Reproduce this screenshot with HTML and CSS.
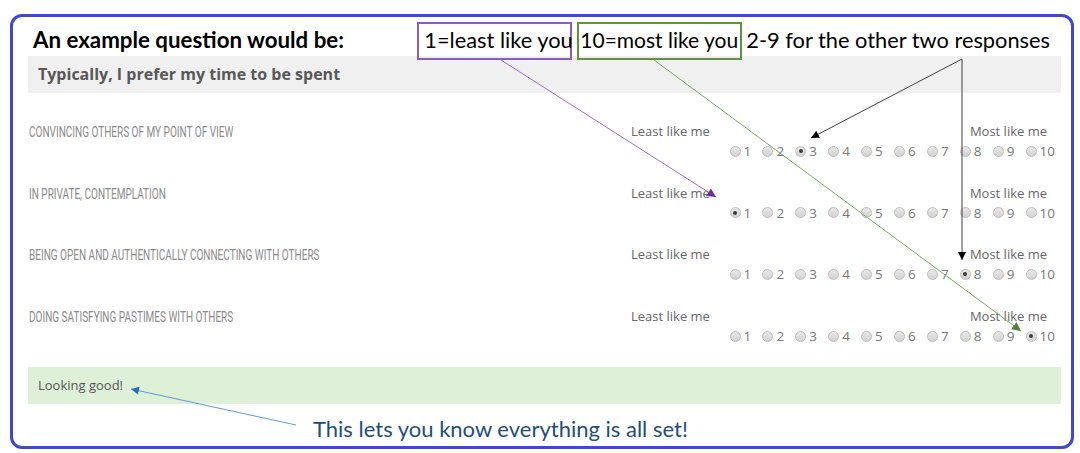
FILE: index.html
```html
<!DOCTYPE html>
<html lang="en">
<head>
<meta charset="utf-8">
<title>Example question</title>
<link rel="stylesheet" href="styles.css">
</head>
<body>
<div class="frame">
  <div class="intro">
    <h1 class="intro-title">An example question would be:</h1>
    <div class="notes">
      <span class="note note-least">1=least like you</span>
      <span class="note note-most">10=most like you</span>
      <span class="note-rest">2-9 for the other two responses</span>
    </div>
  </div>
  <div class="question">Typically, I prefer my time to be spent</div>
  <div class="rows">
    <div class="row">
      <div class="label"><span class="label-text">CONVINCING OTHERS OF MY POINT OF VIEW</span></div>
      <div class="scale">
        <div class="ends"><span>Least like me</span><span>Most like me</span></div>
        <div class="choices">
          <span class="choice"><span class="radio"></span>1</span>
          <span class="choice"><span class="radio"></span>2</span>
          <span class="choice"><span class="radio checked"></span>3</span>
          <span class="choice"><span class="radio"></span>4</span>
          <span class="choice"><span class="radio"></span>5</span>
          <span class="choice"><span class="radio"></span>6</span>
          <span class="choice"><span class="radio"></span>7</span>
          <span class="choice"><span class="radio"></span>8</span>
          <span class="choice"><span class="radio"></span>9</span>
          <span class="choice last"><span class="radio"></span>10</span>
        </div>
      </div>
    </div>
    <div class="row">
      <div class="label"><span class="label-text">IN PRIVATE, CONTEMPLATION</span></div>
      <div class="scale">
        <div class="ends"><span>Least like me</span><span>Most like me</span></div>
        <div class="choices">
          <span class="choice"><span class="radio checked"></span>1</span>
          <span class="choice"><span class="radio"></span>2</span>
          <span class="choice"><span class="radio"></span>3</span>
          <span class="choice"><span class="radio"></span>4</span>
          <span class="choice"><span class="radio"></span>5</span>
          <span class="choice"><span class="radio"></span>6</span>
          <span class="choice"><span class="radio"></span>7</span>
          <span class="choice"><span class="radio"></span>8</span>
          <span class="choice"><span class="radio"></span>9</span>
          <span class="choice last"><span class="radio"></span>10</span>
        </div>
      </div>
    </div>
    <div class="row">
      <div class="label"><span class="label-text">BEING OPEN AND AUTHENTICALLY CONNECTING WITH OTHERS</span></div>
      <div class="scale">
        <div class="ends"><span>Least like me</span><span>Most like me</span></div>
        <div class="choices">
          <span class="choice"><span class="radio"></span>1</span>
          <span class="choice"><span class="radio"></span>2</span>
          <span class="choice"><span class="radio"></span>3</span>
          <span class="choice"><span class="radio"></span>4</span>
          <span class="choice"><span class="radio"></span>5</span>
          <span class="choice"><span class="radio"></span>6</span>
          <span class="choice"><span class="radio"></span>7</span>
          <span class="choice"><span class="radio checked"></span>8</span>
          <span class="choice"><span class="radio"></span>9</span>
          <span class="choice last"><span class="radio"></span>10</span>
        </div>
      </div>
    </div>
    <div class="row">
      <div class="label"><span class="label-text">DOING SATISFYING PASTIMES WITH OTHERS</span></div>
      <div class="scale">
        <div class="ends"><span>Least like me</span><span>Most like me</span></div>
        <div class="choices">
          <span class="choice"><span class="radio"></span>1</span>
          <span class="choice"><span class="radio"></span>2</span>
          <span class="choice"><span class="radio"></span>3</span>
          <span class="choice"><span class="radio"></span>4</span>
          <span class="choice"><span class="radio"></span>5</span>
          <span class="choice"><span class="radio"></span>6</span>
          <span class="choice"><span class="radio"></span>7</span>
          <span class="choice"><span class="radio"></span>8</span>
          <span class="choice"><span class="radio"></span>9</span>
          <span class="choice last"><span class="radio checked"></span>10</span>
        </div>
      </div>
    </div>
  </div>
  <div class="status">Looking good!</div>
  <div class="caption">This lets you know everything is all set!</div>
</div>
<svg class="annotations" width="1080" height="453" viewBox="0 0 1080 453" xmlns="http://www.w3.org/2000/svg">
  <defs>
    <marker id="head-purple" viewBox="0 0 10 10" refX="10" refY="5" markerWidth="9" markerHeight="9" markerUnits="userSpaceOnUse" orient="auto"><path d="M0 0 L10 5 L0 10 z" fill="#7030a0"/></marker>
    <marker id="head-green" viewBox="0 0 10 10" refX="10" refY="5" markerWidth="9" markerHeight="9" markerUnits="userSpaceOnUse" orient="auto"><path d="M0 0 L10 5 L0 10 z" fill="#548235"/></marker>
    <marker id="head-black" viewBox="0 0 10 10" refX="10" refY="5" markerWidth="8" markerHeight="8" markerUnits="userSpaceOnUse" orient="auto"><path d="M0 0 L10 5 L0 10 z" fill="#000"/></marker>
    <marker id="head-blue" viewBox="0 0 10 10" refX="10" refY="5" markerWidth="8" markerHeight="8" markerUnits="userSpaceOnUse" orient="auto"><path d="M0 0 L10 5 L0 10 z" fill="#1f6fc0"/></marker>
  </defs>
  <line x1="501" y1="60" x2="716" y2="197" stroke="#9a6cc8" stroke-width="1" marker-end="url(#head-purple)"/>
  <line x1="654" y1="60" x2="1021" y2="331" stroke="#7aa85a" stroke-width="1" marker-end="url(#head-green)"/>
  <line x1="962" y1="59" x2="811" y2="138" stroke="#404040" stroke-width="1" marker-end="url(#head-black)"/>
  <line x1="962" y1="59" x2="962" y2="260" stroke="#404040" stroke-width="1" marker-end="url(#head-black)"/>
  <line x1="296" y1="425" x2="131" y2="389" stroke="#5b9bd5" stroke-width="1" marker-end="url(#head-blue)"/>
</svg>
</body>
</html>
```

FILE: styles.css
```css
html, body {
  margin: 0;
  padding: 0;
  background: #ffffff;
}

body {
  width: 1080px;
  height: 453px;
  overflow: hidden;
  font-family: "Open Sans", "Noto Sans", sans-serif;
}

.frame {
  margin: 14px 0 0 10px;
  width: 1064px;
  height: 435px;
  box-sizing: border-box;
  border: 3px solid #3f48cc;
  border-radius: 12px;
  padding: 0 10px 0 15px;
}

.intro {
  height: 39px;
  display: flex;
  align-items: flex-start;
  position: relative;
  z-index: 1;
}

.intro-title {
  margin: 10px 0 0 5px;
  font-family: Lato, "Open Sans", sans-serif;
  font-weight: 700;
  font-size: 22.3px;
  line-height: 26px;
  color: #000;
}

.notes {
  margin: 5px 11px 0 auto;
  display: flex;
  align-items: flex-start;
  font-family: Lato, "Open Sans", sans-serif;
  font-size: 21.8px;
  color: #000;
}

.note {
  height: 38px;
  box-sizing: border-box;
  line-height: 32px;
  border: 2px solid;
  white-space: nowrap;
}

.note-least {
  width: 155px;
  padding-left: 5px;
  border-color: #8a5cbc;
}

.note-most {
  width: 165px;
  margin-left: 5px;
  padding-left: 1px;
  font-size: 21px;
  border-color: #5f9440;
}

.note-rest {
  margin-left: 4px;
  padding-top: 2px;
  line-height: 32px;
  white-space: nowrap;
}

.question {
  height: 37px;
  background: #f0f0f0;
  padding-left: 10px;
  font-weight: 700;
  font-size: 16px;
  line-height: 37px;
  color: #585858;
}

.rows {
  padding-top: 28px;
}

.row {
  display: flex;
  height: 40px;
  margin-bottom: 21.7px;
  padding-right: 6px;
}

.row:last-child {
  margin-bottom: 0;
}

.label {
  flex: 1;
  padding-left: 1px;
  line-height: 20px;
  white-space: nowrap;
}

.label-text {
  display: inline-block;
  font-family: Roboto, "DejaVu Sans", sans-serif;
  font-size: 14px;
  color: #8a8a8a;
  transform: scaleX(0.715);
  transform-origin: left center;
}

.scale {
  width: 424px;
  display: flex;
  flex-direction: column;
}

.ends {
  display: flex;
  justify-content: space-between;
  padding: 0 8px 0 0;
  font-size: 13px;
  line-height: 20px;
  color: #666;
}

.choices {
  display: flex;
  justify-content: flex-end;
  font-size: 13.5px;
  line-height: 20px;
  color: #777;
}

.choice {
  width: 32.9px;
  display: flex;
  align-items: center;
  gap: 3px;
}

.choice.last {
  width: auto;
}

.radio {
  width: 11px;
  height: 11px;
  box-sizing: border-box;
  border-radius: 50%;
  border: 1px solid #bdbdbd;
  background: linear-gradient(#e8e8e8, #d2d2d2);
  display: flex;
  align-items: center;
  justify-content: center;
}

.radio.checked::after {
  content: "";
  width: 4px;
  height: 4px;
  border-radius: 50%;
  background: #3a3a3a;
}

.status {
  margin-top: 21px;
  height: 37px;
  background: #dff0d8;
  padding-left: 10px;
  font-size: 13px;
  line-height: 37px;
  color: #555;
}

.caption {
  margin-top: 12px;
  padding-left: 285px;
  font-family: Lato, "Open Sans", sans-serif;
  font-size: 22px;
  line-height: 26px;
  color: #1f4e79;
}

.annotations {
  position: absolute;
  top: 0;
  left: 0;
  pointer-events: none;
}
```
